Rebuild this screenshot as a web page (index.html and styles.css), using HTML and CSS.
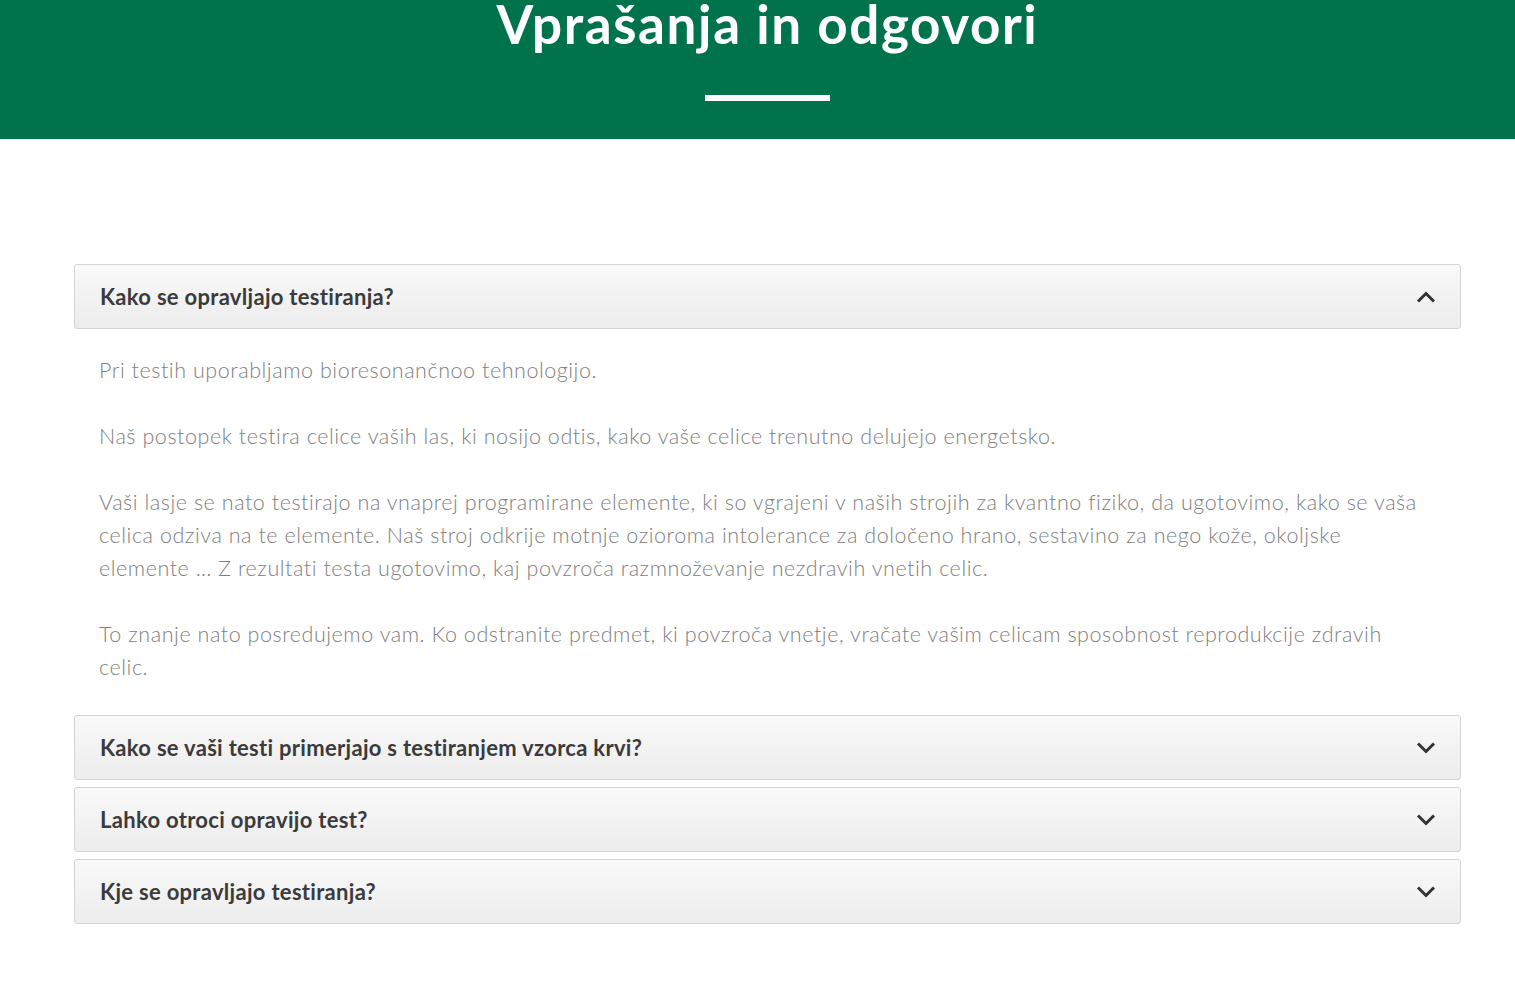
FILE: index.html
```html
<!DOCTYPE html>
<html lang="sl">
<head>
<meta charset="utf-8">
<title>Vprašanja in odgovori</title>
<link rel="stylesheet" href="styles.css">
</head>
<body>
<header class="hero">
  <h1 class="hero-title">Vprašanja in odgovori</h1>
  <div class="hero-bar"></div>
</header>
<main class="faq">
  <section class="item open">
    <div class="item-head">
      <span class="item-q">Kako se opravljajo testiranja?</span>
      <svg class="chev" width="20" height="12" viewBox="0 0 20 12"><path d="M2 10.5 L10 2.5 L18 10.5" fill="none" stroke="#333" stroke-width="3"/></svg>
    </div>
    <div class="item-body">
      <p>Pri testih uporabljamo bioresonančnoo tehnologijo.</p>
      <p>Naš postopek testira celice vaših las, ki nosijo odtis, kako vaše celice trenutno delujejo energetsko.</p>
      <p>Vaši lasje se nato testirajo na vnaprej programirane elemente, ki so vgrajeni v naših strojih za kvantno fiziko, da ugotovimo, kako se vaša celica odziva na te elemente. Naš stroj odkrije motnje ozioroma intolerance za določeno hrano, sestavino za nego kože, okoljske elemente … Z rezultati testa ugotovimo, kaj povzroča razmnoževanje nezdravih vnetih celic.</p>
      <p>To znanje nato posredujemo vam. Ko odstranite predmet, ki povzroča vnetje, vračate vašim celicam sposobnost reprodukcije zdravih celic.</p>
    </div>
  </section>
  <section class="item">
    <div class="item-head">
      <span class="item-q">Kako se vaši testi primerjajo s testiranjem vzorca krvi?</span>
      <svg class="chev" width="20" height="12" viewBox="0 0 20 12"><path d="M2 1.5 L10 9.5 L18 1.5" fill="none" stroke="#333" stroke-width="3"/></svg>
    </div>
  </section>
  <section class="item">
    <div class="item-head">
      <span class="item-q">Lahko otroci opravijo test?</span>
      <svg class="chev" width="20" height="12" viewBox="0 0 20 12"><path d="M2 1.5 L10 9.5 L18 1.5" fill="none" stroke="#333" stroke-width="3"/></svg>
    </div>
  </section>
  <section class="item">
    <div class="item-head">
      <span class="item-q">Kje se opravljajo testiranja?</span>
      <svg class="chev" width="20" height="12" viewBox="0 0 20 12"><path d="M2 1.5 L10 9.5 L18 1.5" fill="none" stroke="#333" stroke-width="3"/></svg>
    </div>
  </section>
</main>
</body>
</html>
```
FILE: styles.css
```css
html, body {
  margin: 0;
  padding: 0;
  background: #ffffff;
}
body {
  font-family: "Lato", "Noto Sans", sans-serif;
}
.hero {
  background: #00734c;
  height: 139px;
  box-sizing: border-box;
  padding-left: 20px;
  display: flex;
  flex-direction: column;
  align-items: center;
}
.hero-title {
  margin: 0;
  margin-top: -11px;
  font-family: "Lato", sans-serif;
  font-weight: 700;
  font-size: 53px;
  letter-spacing: 1.6px;
  line-height: 70px;
  color: #ffffff;
}
.hero-bar {
  width: 125px;
  height: 6px;
  background: #ffffff;
  margin-top: 36px;
}
.faq {
  margin: 125px 0 0 74px;
  width: 1387px;
  display: flex;
  flex-direction: column;
  gap: 7px;
}
.item-head {
  height: 65px;
  box-sizing: border-box;
  border: 1px solid #d4d4d4;
  border-radius: 3px;
  background: linear-gradient(#f9f9f9, #ececec);
  display: flex;
  align-items: center;
  justify-content: space-between;
  padding: 0 24px 0 25px;
}
.item-q {
  font-family: "Lato", sans-serif;
  font-weight: 700;
  font-size: 22px;
  color: #3b3b3b;
  letter-spacing: 0.3px;
}
.chev {
  display: block;
}
.item-body {
  padding: 25px 38px 24px 25px;
}
.item-body p {
  margin: 0 0 33px 0;
  font-family: "Lato", sans-serif;
  font-weight: 300;
  font-size: 21.5px;
  letter-spacing: 0.55px;
  line-height: 33px;
  color: #808080;
}
.item-body p:last-child {
  margin-bottom: 0;
}
```
